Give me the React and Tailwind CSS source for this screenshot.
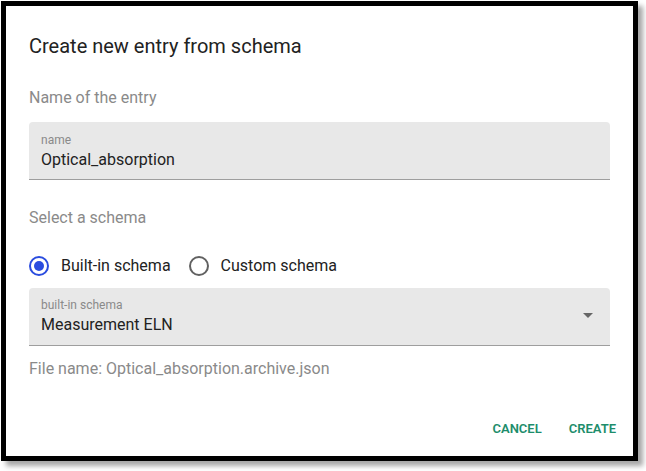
import React, { useState } from "react";

const font = { fontFamily: "Roboto, 'Noto Sans', sans-serif" };

function Radio({ checked, label, onClick }) {
  return (
    <button type="button" onClick={onClick} className="flex items-center gap-[12px]">
      <span
        className={
          "flex size-[20px] items-center justify-center rounded-full border-2 " +
          (checked ? "border-[#2a4cdf]" : "border-[#616161]")
        }
      >
        {checked && <span className="size-[10px] rounded-full bg-[#2a4cdf]" />}
      </span>
      <span className="text-[16px] text-[#222]">{label}</span>
    </button>
  );
}

export default function App() {
  const [schema, setSchema] = useState("builtin");

  return (
    <div className="min-h-[471px] bg-white pl-[1px] pt-[1px]" style={font}>
      <div className="flex h-[460px] w-[637px] flex-col border-[5px] border-black bg-white shadow-[5px_5px_5px_rgba(0,0,0,0.35)]">
        <div className="px-[23px] pt-[24px]">
          <h2 className="text-[20px] leading-[32px] text-[#222]">Create new entry from schema</h2>

          <p className="mt-[24px] text-[16px] leading-[24px] text-[#8a8a8a]">Name of the entry</p>

          <div className="mt-[12px] h-[58px] rounded-t-[4px] border-b border-[#9e9e9e] bg-[#e8e8e8] px-[12px] pt-[10px]">
            <div className="text-[12px] leading-[16px] text-[#8a8a8a]">name</div>
            <div className="text-[16px] leading-[24px] text-[#222]">Optical_absorption</div>
          </div>

          <p className="mt-[26px] text-[16px] leading-[24px] text-[#8a8a8a]">Select a schema</p>

          <div className="mt-[15px] flex h-[42px] items-center gap-[18px]">
            <Radio checked={schema === "builtin"} label="Built-in schema" onClick={() => setSchema("builtin")} />
            <Radio checked={schema === "custom"} label="Custom schema" onClick={() => setSchema("custom")} />
          </div>

          <div className="mt-[1px] flex h-[58px] items-center justify-between rounded-t-[4px] border-b border-[#9e9e9e] bg-[#e8e8e8] pl-[12px] pr-[17px]">
            <div>
              <div className="text-[12px] leading-[16px] text-[#8a8a8a]">built-in schema</div>
              <div className="text-[16px] leading-[24px] text-[#222]">Measurement ELN</div>
            </div>
            <svg width="10" height="5" viewBox="0 0 10 5" className="mb-[2px]">
              <path d="M0 0 L10 0 L5 5 Z" fill="#666" />
            </svg>
          </div>

          <p className="mt-[11px] text-[16px] leading-[24px] text-[#8a8a8a]">
            File name: Optical_absorption.archive.json
          </p>
        </div>

        <div className="mt-auto flex justify-end gap-[11px] pl-[10px] pr-[9px] pb-[9px]">
          <button type="button" className="px-[8px] py-[6px] text-[13px] font-semibold uppercase leading-[24px] text-[#1d8d6b]">
            Cancel
          </button>
          <button type="button" className="px-[8px] py-[6px] text-[13px] font-semibold uppercase leading-[24px] text-[#1d8d6b]">
            Create
          </button>
        </div>
      </div>
    </div>
  );
}
